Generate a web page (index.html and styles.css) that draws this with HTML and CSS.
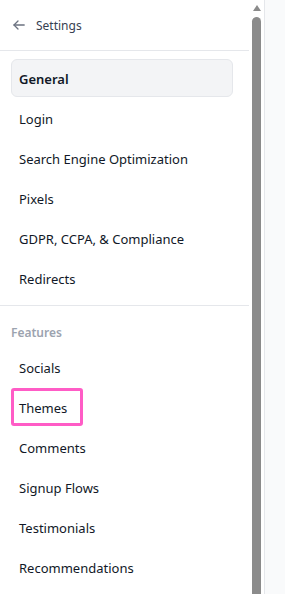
FILE: index.html
```html
<!DOCTYPE html>
<html lang="en">
<head>
    <meta charset="UTF-8">
    <meta name="viewport" content="width=device-width, initial-scale=1.0">
    <title>Settings</title>
    <link rel="stylesheet" href="styles.css">
</head>
<body>

    <!-- Barra lateral de ajustes -->
    <aside class="sidebar">
        <div class="sidebar-content">
            <div class="sidebar-header">
                <svg class="back-icon" width="12" height="10" viewBox="0 0 12 10" fill="none" stroke="#6b7280" stroke-width="1.3" stroke-linecap="round" stroke-linejoin="round">
                    <path d="M11.2 5H1"/>
                    <path d="M5 1L1 5l4 4"/>
                </svg>
                <span class="header-title">Settings</span>
            </div>

            <nav class="nav-group">
                <a class="nav-item active">General</a>
                <a class="nav-item">Login</a>
                <a class="nav-item">Search Engine Optimization</a>
                <a class="nav-item">Pixels</a>
                <a class="nav-item">GDPR, CCPA, &amp; Compliance</a>
                <a class="nav-item">Redirects</a>
            </nav>

            <nav class="nav-group features">
                <div class="group-label">Features</div>
                <a class="nav-item">Socials</a>
                <a class="nav-item highlight">Themes</a>
                <a class="nav-item">Comments</a>
                <a class="nav-item">Signup Flows</a>
                <a class="nav-item">Testimonials</a>
                <a class="nav-item">Recommendations</a>
            </nav>
        </div>

        <!-- Barra de desplazamiento -->
        <div class="scrollbar">
            <div class="scroll-arrow"></div>
            <div class="scroll-thumb"></div>
        </div>
    </aside>

    <main class="content"></main>

</body>
</html>
```

FILE: styles.css
```css
body {
    font-family: "Noto Sans", Arial, sans-serif;
    margin: 0;
    height: 100vh;
    display: flex;
    overflow: hidden;
    background-color: #ffffff;
    color: #111827;
}
.sidebar {
    display: flex;
    width: 265px;
    flex-shrink: 0;
    border-right: 1px solid #e5e7eb;
    box-sizing: border-box;
}
.sidebar-content {
    width: 249px;
    flex-shrink: 0;
}
.sidebar-header {
    height: 50px;
    display: flex;
    align-items: center;
    gap: 11px;
    padding-left: 13px;
    border-bottom: 1px solid #e5e7eb;
}
.header-title {
    font-size: 12px;
    color: #374151;
}
.nav-group {
    display: flex;
    flex-direction: column;
    gap: 2px;
    padding: 8px 16px 8px 11px;
    border-bottom: 1px solid #e5e7eb;
}
.nav-group.features {
    border-bottom: none;
    padding-top: 17px;
}
.group-label {
    font-size: 12px;
    font-weight: 600;
    color: #9ca3af;
    line-height: 20px;
    margin-bottom: 3px;
}
.nav-item {
    display: flex;
    align-items: center;
    height: 38px;
    box-sizing: border-box;
    padding: 2px 7px 0;
    border: 1px solid transparent;
    border-radius: 6px;
    font-size: 13px;
    color: #111827;
    cursor: pointer;
}
.nav-item.active {
    background-color: #f3f4f6;
    border-color: #e5e7eb;
    font-weight: 600;
}
.nav-item.highlight {
    width: 72px;
    border: 3px solid #ff5cc6;
    border-radius: 3px;
    padding-left: 5px;
}
.scrollbar {
    width: 15px;
    display: flex;
    flex-direction: column;
    align-items: center;
    padding-top: 5px;
    gap: 6px;
}
.scroll-arrow {
    width: 0;
    height: 0;
    border-left: 4.5px solid transparent;
    border-right: 4.5px solid transparent;
    border-bottom: 6px solid #8b8b8b;
}
.scroll-thumb {
    flex: 1;
    width: 9px;
    background-color: #8b8b8b;
    border-radius: 4.5px 4.5px 0 0;
}
.content {
    flex: 1;
    background-color: #f9fafb;
}
```
